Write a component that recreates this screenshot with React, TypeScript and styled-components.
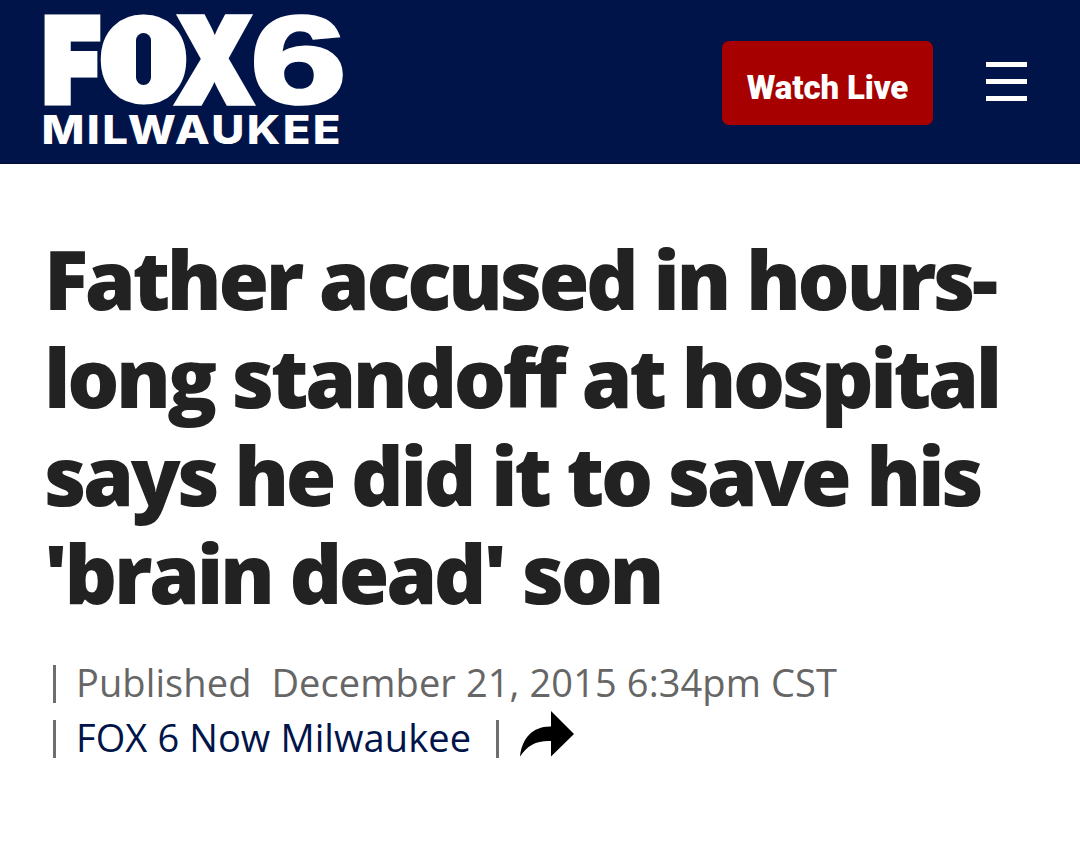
import { FC } from "react";
import styled, { createGlobalStyle } from "styled-components";

const GlobalStyle = createGlobalStyle`
  body {
    margin: 0;
    background: #ffffff;
    font-family: "Open Sans", sans-serif;
  }
`;

const Page = styled.div`
  min-height: 842px;
  background: #ffffff;
`;

const Header = styled.header`
  display: flex;
  align-items: flex-start;
  box-sizing: border-box;
  height: 164px;
  padding: 0 53px 0 40px;
  background: #001449;
  border-bottom: 1px solid #000b35;
`;

const LogoLink = styled.a`
  display: block;
  width: 310px;
  height: 150px;
  margin-right: auto;
`;

const LogoSvg = styled.svg`
  display: block;
  overflow: visible;
`;

const LogoGlyph = styled.text<{ $family: string; $weight: number }>`
  font-family: ${(props) => props.$family}, sans-serif;
  font-weight: ${(props) => props.$weight};
  font-size: 100px;
  fill: #ffffff;
  stroke: #ffffff;
`;

const LogoCity = styled(LogoGlyph)`
  letter-spacing: 5.2px;
`;

const WatchButton = styled.button`
  width: 211px;
  height: 84px;
  margin: 41px 53px 0 0;
  padding: 9px 0 0;
  border: 0;
  border-radius: 7px;
  background: #a60000;
  color: #ffffff;
  font-family: Roboto, sans-serif;
  font-size: 33px;
  font-weight: 900;
  line-height: 40px;
  letter-spacing: -0.15px;
  white-space: nowrap;
`;

const MenuButton = styled.button`
  display: flex;
  flex-direction: column;
  justify-content: space-between;
  width: 41px;
  height: 39px;
  margin: 62px 0 0;
  padding: 0;
  border: 0;
  background: transparent;
`;

const MenuBar = styled.span`
  height: 5px;
  background: #ffffff;
`;

const Article = styled.main`
  padding: 65px 40px 0 44px;
`;

const Headline = styled.h1`
  margin: 0;
  color: #222222;
  font-size: 82px;
  font-weight: 800;
  line-height: 98px;
  letter-spacing: -3.38px;
  white-space: nowrap;
`;

const Meta = styled.div`
  margin-top: 35px;
  padding-left: 9px;
  color: #666666;
  font-size: 38px;
  line-height: 53px;
  letter-spacing: 0.1px;
`;

const MetaRow = styled.div`
  display: flex;
  align-items: center;
  height: 55px;
  white-space: pre;
`;

const Divider = styled.span`
  width: 3px;
  height: 38px;
  background: #6e6e6e;
`;

const MetaText = styled.span`
  margin-left: 20px;
  padding-bottom: 2px;
`;

const SourceLink = styled.a`
  margin: 0 25px 0 20px;
  padding-bottom: 2px;
  color: #001449;
`;

const ShareIcon = styled.svg`
  width: 54px;
  height: 46px;
  margin: -10px 0 0 21px;
`;

type Glyph = {
  char: string;
  x: number;
  y: number;
  sx: number;
  sy: number;
  stroke: number;
  family: string;
  weight: number;
};

// x / y are the pen position, sx / sy stretch the glyph to the station's wide lettering
const glyphs: Glyph[] = [
  { char: "F", x: 3.9, y: 100.5, sx: 0.94, sy: 1.128, stroke: 8, family: "Inter", weight: 900 },
  { char: "O", x: 66.9, y: 93.7, sx: 0.942, sy: 0.942, stroke: 20, family: "Inter", weight: 900 },
  { char: "X", x: 135, y: 102.5, sx: 1.005, sy: 1.18, stroke: 4.5, family: "Inter", weight: 900 },
  { char: "6", x: 210.2, y: 103, sx: 1.73, sy: 1.25, stroke: 3, family: "Liberation Sans", weight: 700 },
];

const Logo: FC = () => (
  <LogoSvg width="310" height="150" viewBox="0 0 310 150">
    {glyphs.map((g) => (
      <LogoGlyph
        key={g.char}
        $family={`"${g.family}"`}
        $weight={g.weight}
        strokeWidth={g.stroke}
        transform={`translate(${g.x} ${g.y}) scale(${g.sx} ${g.sy})`}
      >
        {g.char}
      </LogoGlyph>
    ))}
    {/* narrow slot in the O */}
    <rect x="96" y="33" width="15" height="52" rx="7.5" fill="#001449" />
    <LogoCity
      $family={'"Inter"'}
      $weight={800}
      strokeWidth={0}
      transform="translate(1.5 143.5) scale(.455 .4)"
    >
      MILWAUKEE
    </LogoCity>
  </LogoSvg>
);

const App: FC = () => {
  return (
    <>
      <GlobalStyle />
      <Page>
        <Header>
          <LogoLink aria-label="FOX6 Milwaukee">
            <Logo />
          </LogoLink>
          <WatchButton>Watch Live</WatchButton>
          <MenuButton aria-label="Menu">
            <MenuBar />
            <MenuBar />
            <MenuBar />
          </MenuButton>
        </Header>
        <Article>
          <Headline>
            Father accused in hours-
            <br />
            long standoff at hospital
            <br />
            says he did it to save his
            <br />
            'brain dead' son
          </Headline>
          <Meta>
            <MetaRow>
              <Divider />
              <MetaText>{"Published  December 21, 2015 6:34pm CST"}</MetaText>
            </MetaRow>
            <MetaRow>
              <Divider />
              <SourceLink>FOX 6 Now Milwaukee</SourceLink>
              <Divider />
              <ShareIcon viewBox="0 0 54 46">
                <path d="M31 0L54 23L31 45.5V30C16 29.5 8 34 0 45.5C2 27 13 15 31 15.5Z" />
              </ShareIcon>
            </MetaRow>
          </Meta>
        </Article>
      </Page>
    </>
  );
};

export default App;
